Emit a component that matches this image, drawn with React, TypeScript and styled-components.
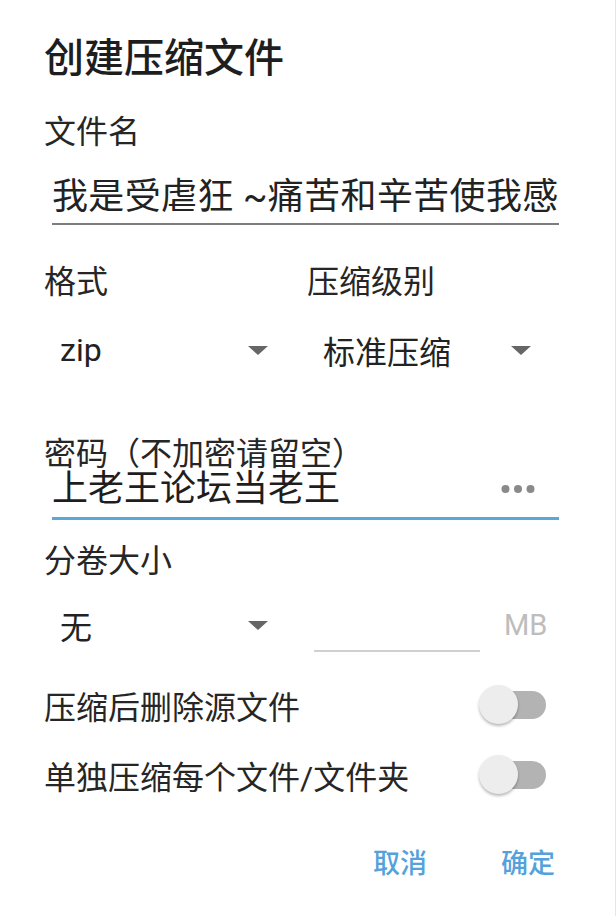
import React from 'react';
import styled, { createGlobalStyle } from 'styled-components';

const Global = createGlobalStyle`
  html, body { margin: 0; padding: 0; background: #fff; }
  body { font-family: Roboto, "Noto Sans CJK SC", sans-serif; color: #222; }
  * { box-sizing: border-box; }
`;

const Dialog = styled.div`
  width: 616px;
  height: 916px;
  background: #fff;
  border-right: 1px solid #e6e6e6;
  display: flex;
  flex-direction: column;
  padding: 40px 56px 0 44px;
`;

const Title = styled.h1`
  margin: 0;
  font-size: 40px;
  line-height: 38px;
  font-weight: 500;
  color: #1e1e1e;
  white-space: nowrap;
`;

const Label = styled.div<{ $top: number; $h?: number }>`
  margin-top: ${(p) => p.$top}px;
  height: ${(p) => p.$h ?? 40}px;
  padding-top: ${(p) => (p.$h ? 0 : 4)}px;
  line-height: ${(p) => (p.$h ? p.$h : 36)}px;
  font-size: 32px;
  color: #262626;
  white-space: nowrap;
`;

const TextField = styled.div`
  margin: 23px 0 0 8px;
  font-size: 36px;
  letter-spacing: 0.35px;
  line-height: 48px;
  padding-bottom: 2px;
  border-bottom: 2px solid #7d7d7d;
  white-space: nowrap;
  color: #222;
`;

const TwoCol = styled.div<{ $top: number; $h?: number }>`
  margin-top: ${(p) => p.$top}px;
  display: grid;
  grid-template-columns: 263px 1fr;
  align-items: center;
  ${(p) => (p.$h ? `height: ${p.$h}px;` : '')}
`;

const Select = styled.div`
  width: 224px;
  height: 60px;
  padding-left: 16px;
  display: flex;
  align-items: center;
  justify-content: space-between;
  font-size: 32px;
  color: #222;
`;

const Caret = () => (
  <svg width="20" height="9" viewBox="0 0 20 9">
    <polygon points="0,0 20,0 10,9" fill="#666" />
  </svg>
);

const PasswordField = styled.div`
  margin: 0 0 0 8px;
  display: flex;
  align-items: center;
  justify-content: space-between;
  font-size: 36px;
  line-height: 40px;
  padding: 0 24px 8px 0;
  border-bottom: 3px solid #5aa7d9;
  color: #1e1e1e;
`;

const Dots = () => (
  <svg width="34" height="10" viewBox="0 0 34 10">
    <circle cx="4.5" cy="5" r="4" fill="#8a8a8a" />
    <circle cx="17" cy="5" r="4" fill="#8a8a8a" />
    <circle cx="29.5" cy="5" r="4" fill="#8a8a8a" />
  </svg>
);

const SizeCell = styled.div`
  display: flex;
  align-items: center;
`;

const SizeInput = styled.div`
  margin-left: 7px;
  width: 166px;
  height: 54px;
  border-bottom: 2px solid #d0d0d0;
`;

const Unit = styled.span`
  margin-left: 24px;
  font-size: 29px;
  color: #bdbdbd;
`;

const SwitchRow = styled.div<{ $top: number }>`
  margin-top: ${(p) => p.$top}px;
  height: 60px;
  display: flex;
  align-items: center;
  justify-content: space-between;
  font-size: 32px;
  color: #262626;
`;

const Switch = styled.div`
  position: relative;
  width: 67px;
  height: 40px;
  margin-right: 13px;
`;

const Track = styled.div`
  position: absolute;
  right: 0;
  top: 6px;
  width: 62px;
  height: 28px;
  border-radius: 14px;
  background: #b3b3b3;
`;

const Thumb = styled.div`
  position: absolute;
  left: 0;
  top: 0;
  width: 39px;
  height: 39px;
  border-radius: 50%;
  background: #ededed;
  box-shadow: 0 2px 3px rgba(0, 0, 0, 0.28);
`;

const Actions = styled.div`
  margin-top: 34px;
  height: 50px;
  display: flex;
  justify-content: flex-end;
  align-items: center;
  gap: 74px;
  padding-right: 4px;
`;

const Button = styled.button`
  background: none;
  border: none;
  padding: 0;
  font-family: Roboto, "Noto Sans CJK SC", sans-serif;
  font-size: 27px;
  font-weight: 500;
  line-height: 50px;
  color: #55a2db;
`;

const Toggle = () => (
  <Switch>
    <Track />
    <Thumb />
  </Switch>
);

export default function App() {
  return (
    <>
      <Global />
      <Dialog>
        <Title>创建压缩文件</Title>
        <Label $top={32}>文件名</Label>
        <TextField>我是受虐狂 ~痛苦和辛苦使我感</TextField>
        <TwoCol $top={35}>
          <Label $top={0}>格式</Label>
          <Label $top={0}>压缩级别</Label>
        </TwoCol>
        <TwoCol $top={20}>
          <Select>
            <span>zip</span>
            <Caret />
          </Select>
          <Select>
            <span>标准压缩</span>
            <Caret />
          </Select>
        </TwoCol>
        <Label $top={59} $h={30}>密码（不加密请留空）</Label>
        <PasswordField>
          <span>上老王论坛当老王</span>
          <Dots />
        </PasswordField>
        <Label $top={19}>分卷大小</Label>
        <TwoCol $top={11} $h={70}>
          <Select>
            <span>无</span>
            <Caret />
          </Select>
          <SizeCell>
            <SizeInput />
            <Unit>MB</Unit>
          </SizeCell>
        </TwoCol>
        <SwitchRow $top={15}>
          <span>压缩后删除源文件</span>
          <Toggle />
        </SwitchRow>
        <SwitchRow $top={10}>
          <span>单独压缩每个文件/文件夹</span>
          <Toggle />
        </SwitchRow>
        <Actions>
          <Button>取消</Button>
          <Button>确定</Button>
        </Actions>
      </Dialog>
    </>
  );
}
